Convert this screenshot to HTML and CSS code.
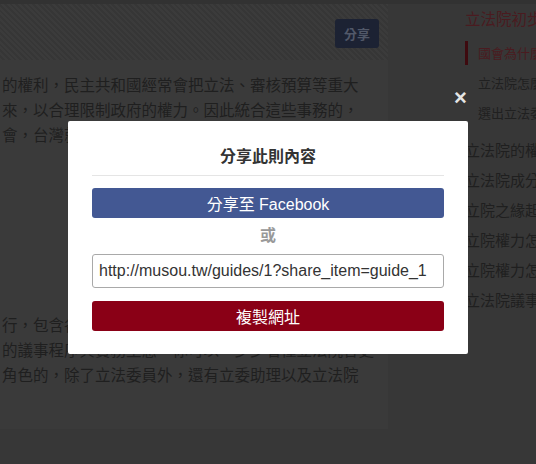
FILE: index.html
```html
<!DOCTYPE html>
<html lang="zh-Hant">
<head>
<meta charset="utf-8">
<title>分享此則內容</title>
<link rel="stylesheet" href="styles.css">
</head>
<body>
<div class="page">
  <div class="topbar"></div>
  <div class="layout">
    <main class="article">
      <div class="article-head">
        <button class="share-btn">分享</button>
      </div>
      <div class="article-body">
        <p class="para">的權利，民主共和國經常會把立法、審核預算等重大<br>來，以合理限制政府的權力。因此統合這些事務的，<br>會，台灣就是立法院。立法院的運作方式與權力範圍</p>
        <p class="para para2">行，包含各種法案的審查、預算的審議與質詢等等，<br>的議事程序與實務生態，你可以一步步看懂立法院各更<br>角色的，除了立法委員外，還有立委助理以及立法院</p>
      </div>
    </main>
    <aside class="sidebar">
      <div class="side-title">立法院初步認識</div>
      <ul class="sub-list">
        <li class="sub-item active">國會為什麼重要</li>
        <li class="sub-item">立法院怎麼運作</li>
        <li class="sub-item">選出立法委員</li>
      </ul>
      <ul class="main-list">
        <li>立法院的權利</li>
        <li>立法院成分</li>
        <li>立院之緣起</li>
        <li>立院權力怎麼來</li>
        <li>立院權力怎麼用</li>
        <li>立法院議事</li>
      </ul>
    </aside>
  </div>
</div>

<div class="backdrop">
  <button class="close" aria-label="關閉">×</button>
  <div class="modal">
    <h2 class="modal-title">分享此則內容</h2>
    <button class="btn btn-fb">分享至 Facebook</button>
    <div class="or">或</div>
    <input class="url" type="text" value="http://musou.tw/guides/1?share_item=guide_1" readonly>
    <button class="btn btn-copy">複製網址</button>
  </div>
</div>
</body>
</html>
```

FILE: styles.css
```css
* { box-sizing: border-box; }
html, body {
  margin: 0;
  padding: 0;
}
body {
  width: 536px;
  height: 464px;
  overflow: hidden;
  background: #373737;
  font-family: "Liberation Sans", "Noto Sans CJK TC", sans-serif;
  position: relative;
}
.page {
  width: 536px;
  height: 464px;
}
.topbar {
  height: 4px;
  background: #323232;
}
.layout {
  display: flex;
  align-items: flex-start;
}
.article {
  width: 388px;
  height: 425px;
  background: #3a3a3a;
}
.article-head {
  height: 56px;
  background: repeating-linear-gradient(45deg, #3b3b3b 0 2px, #363636 2px 4px);
  display: flex;
  justify-content: flex-end;
  align-items: flex-start;
  padding: 15px 9px 0 0;
}
.share-btn {
  width: 44px;
  height: 29px;
  border: 0;
  border-radius: 3px;
  background: #1c2233;
  color: #515869;
  font-family: "Noto Sans CJK TC", sans-serif;
  font-weight: bold;
  font-size: 13px;
  padding: 0;
}
.article-body {
  padding: 12px 0 0 2px;
}
.para {
  margin: 0;
  font-family: "Noto Sans CJK TC", sans-serif;
  font-size: 15.5px;
  line-height: 25px;
  color: #1f1f1f;
  white-space: nowrap;
}
.para2 {
  margin-top: 165px;
}
.sidebar {
  flex: 1;
  padding: 2px 0 0 77px;
  font-family: "Noto Sans CJK TC", sans-serif;
  white-space: nowrap;
  overflow: hidden;
}
.side-title {
  font-size: 15.5px;
  line-height: 24px;
  color: #4a1b20;
}
.sub-list, .main-list {
  list-style: none;
  margin: 0;
  padding: 0;
}
.sub-list {
  margin-top: 11px;
}
.sub-item {
  height: 24px;
  line-height: 24px;
  font-size: 13px;
  color: #202020;
  padding-left: 13px;
  margin-bottom: 6px;
}
.sub-item.active {
  border-left: 3px solid #3e0a0f;
  padding-left: 10px;
  color: #4a1b20;
}
.main-list {
  margin-top: 10px;
}
.main-list li {
  height: 30px;
  line-height: 30px;
  font-size: 15px;
  color: #1f1f1f;
}
.backdrop {
  position: absolute;
  inset: 0;
}
.close {
  position: absolute;
  left: 452px;
  top: 86px;
  width: 17px;
  height: 24px;
  padding: 0;
  border: 0;
  background: none;
  color: #e4e4e4;
  font-family: "Liberation Sans", sans-serif;
  font-weight: bold;
  font-size: 22px;
  line-height: 24px;
}
.modal {
  position: absolute;
  left: 68px;
  top: 121px;
  width: 400px;
  background: #fff;
  border-radius: 2px;
  padding: 25px 24px 23px;
  display: flex;
  flex-direction: column;
}
.modal-title {
  margin: 0;
  font-size: 16px;
  line-height: 22px;
  font-weight: bold;
  color: #333;
  text-align: center;
  padding-bottom: 7px;
  border-bottom: 1px solid #e5e5e5;
}
.btn {
  height: 30px;
  border: 0;
  border-radius: 3px;
  color: #fff;
  font-family: "Liberation Sans", "Noto Sans CJK TC", sans-serif;
  font-size: 16px;
  padding: 0;
}
.btn-fb {
  margin-top: 12px;
  background: #435893;
}
.or {
  height: 36px;
  line-height: 36px;
  text-align: center;
  color: #999;
  font-weight: bold;
  font-size: 16px;
}
.url {
  height: 34px;
  border: 1px solid #a9a9a9;
  border-radius: 3px;
  padding: 0 6px;
  font-family: "Liberation Sans", sans-serif;
  font-size: 16px;
  color: #333;
  width: 100%;
}
.btn-copy {
  margin-top: 13px;
  background: #8a0016;
}
```
